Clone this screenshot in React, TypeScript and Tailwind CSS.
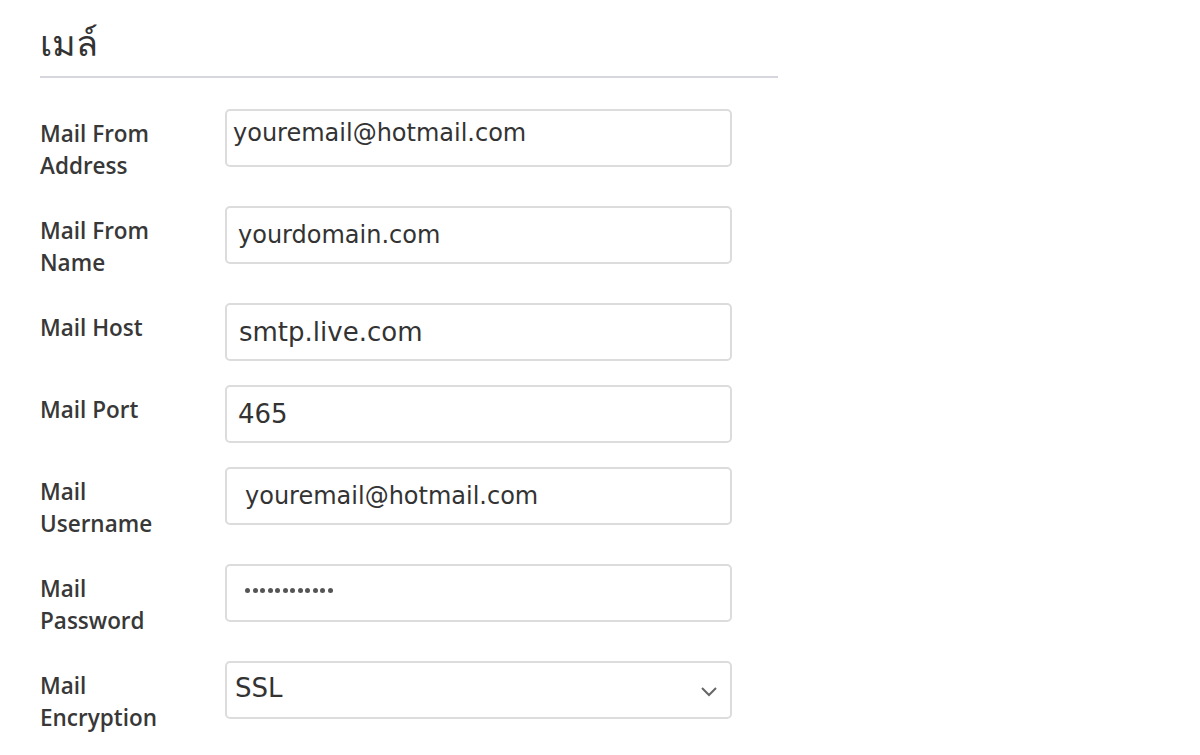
import React from "react";

const label = "font-['Open_Sans',sans-serif] font-semibold text-[22.5px] leading-[32px] text-[#383838] w-[185px] shrink-0 pt-[9px]";
const box = "w-[507px] h-[58px] border-2 border-[#dcdcdc] rounded-[5px] bg-white flex items-center font-['DejaVu_Sans',sans-serif] text-[24px] text-[#333333] shrink-0";

function Row({ children, lab }: { children: React.ReactNode; lab: React.ReactNode }) {
  return (
    <div className="flex items-start mb-6">
      <div className={label}>{lab}</div>
      {children}
    </div>
  );
}

export default function App() {
  return (
    <div className="w-[1200px] h-[755px] bg-white overflow-hidden pl-10">
      <div className="w-[738px]">
        <h1 className="font-['Noto_Sans','Open_Sans',sans-serif] text-[36px] leading-[48px] text-[#333333] pt-[19px] pb-[9px] font-medium">เมล์</h1>
        <div className="h-[2px] bg-[#d6d6de]" />
        <div className="pt-[31px]">
          <Row lab={<>Mail From<br />Address</>}>
            <div className={`${box} pl-[6px] pb-[10px]`}>youremail@hotmail.com</div>
          </Row>
          <Row lab={<>Mail From<br />Name</>}>
            <div className={`${box} pl-[11px]`}>yourdomain.com</div>
          </Row>
          <Row lab="Mail Host">
            <div className={`${box} pl-[12px] text-[26px]`}>smtp.live.com</div>
          </Row>
          <Row lab="Mail Port">
            <div className={`${box} pl-[11px] text-[26px]`}>465</div>
          </Row>
          <Row lab={<>Mail<br />Username</>}>
            <div className={`${box} pl-[18px]`}>youremail@hotmail.com</div>
          </Row>
          <Row lab={<>Mail<br />Password</>}>
            <div className={`${box} pl-[18px] pb-[6px] gap-[2.5px]`}>
              {Array.from({ length: 12 }).map((_, i) => (
                <span key={i} className="block w-[5px] h-[5px] rounded-full bg-[#555555]" />
              ))}
            </div>
          </Row>
          <Row lab={<>Mail<br />Encryption</>}>
            <div className={`${box} pl-[8px] pb-[4px] justify-between pr-[12px] text-[26px]`}>
              <span>SSL</span>
              <svg width="18" height="12" viewBox="0 0 18 12" className="mt-[6px]">
                <path d="M2 3 L9 10 L16 3" fill="none" stroke="#666666" strokeWidth="2" />
              </svg>
            </div>
          </Row>
        </div>
      </div>
    </div>
  );
}
